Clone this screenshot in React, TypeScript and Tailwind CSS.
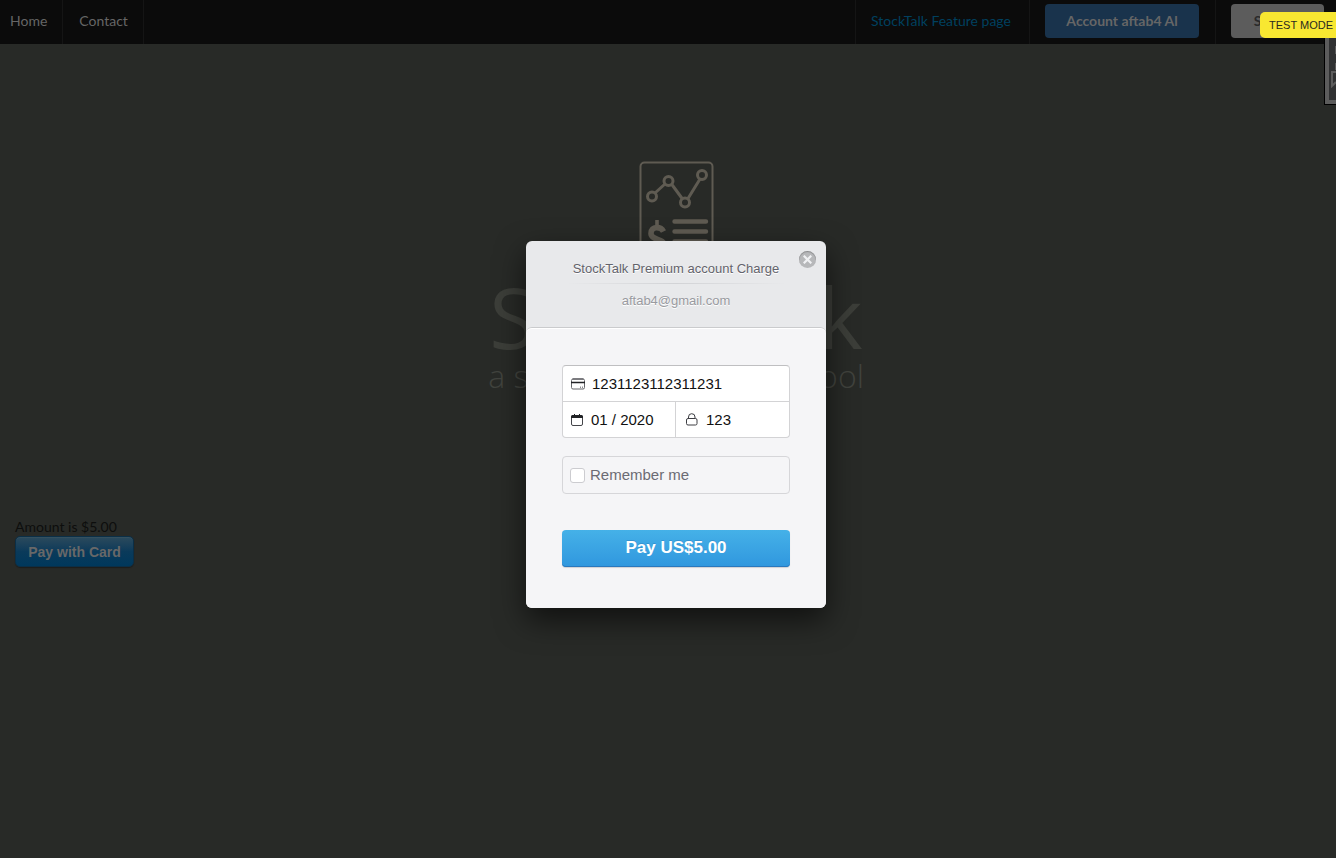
import React from "react";

function Logo() {
  return (
    <svg width="76" height="96" viewBox="-1 0 76 96" fill="none" stroke="#5f5b52" aria-hidden="true">
      <rect x="1.5" y="1.5" width="72" height="93" rx="4" strokeWidth="2" />
      <g strokeWidth="3">
        <path d="M16 32L26.500 22.500M32.500 23L43.500 38M49 37.500L61 18" />
        <circle cx="13" cy="35.500" r="4.500" />
        <circle cx="29.500" cy="20" r="4.500" />
        <circle cx="46" cy="41.500" r="4.500" />
        <circle cx="63" cy="14" r="4.500" />
      </g>
      <path d="M35.500 60.500H67M35.500 70.500H67M35.500 80.500H67" strokeWidth="4.400" strokeLinecap="round" />
      <path d="M24.500 70.500C22 65.500 12 64.500 12 72.500C12 79 25 77.500 25 84C25 91 12 90 9.500 84.500" strokeWidth="5.600" />
      <path d="M18 59V66M18 88V93" strokeWidth="3.600" />
    </svg>
  );
}

function CardIcon() {
  return (
    <svg className="shrink-0" width="14" height="12" viewBox="0 0 14 12" fill="none" aria-hidden="true">
      <rect x="0.5" y="1" width="13" height="10" rx="1.5" stroke="#66676b" />
      <path d="M1.500 1H12.500" stroke="#44454a" />
      <path d="M0 4.500H14" stroke="#222326" strokeWidth="1.600" />
      <path d="M9.500 8.500V10M11.500 8.500V10" stroke="#8b8c90" />
    </svg>
  );
}

function CalendarIcon() {
  return (
    <svg className="shrink-0" width="12" height="12" viewBox="0 0 12 12" fill="none" aria-hidden="true">
      <rect x="0.5" y="1.5" width="11" height="10" rx="1.5" stroke="#44454a" />
      <path d="M0 4V2.500Q0 1 1.500 1H10.500Q12 1 12 2.500V4Z" fill="#222326" />
      <path d="M3.500 0V2M8.500 0V2" stroke="#222326" />
    </svg>
  );
}

function LockIcon() {
  return (
    <svg className="shrink-0" width="12" height="13" viewBox="0 0 12 13" fill="none" stroke="#3c3d42" aria-hidden="true">
      <rect x="0.5" y="5.5" width="10.500" height="6.500" rx="1.5" />
      <path d="M2.500 5.500V4Q2.500 0.700 5.700 0.700Q9 0.700 9 4V5.500" />
    </svg>
  );
}

function NavBar() {
  return (
    <nav className="flex h-11 items-stretch justify-between bg-[#0b0b0b] text-sm text-[#666]">
      <div className="flex">
        <a href="#home" className="flex items-center border-r border-[#151515] pr-[15px] pb-[2px] pl-[10px]">Home</a>
        <a href="#contact" className="flex items-center border-r border-[#151515] pr-[15px] pb-[2px] pl-4">Contact</a>
      </div>
      <div className="flex pr-3">
        <div className="flex items-center border-l border-[#151515] pr-4 pb-[2px] pl-[15px]">
          <a href="#feature" className="w-[142px] whitespace-nowrap text-[#00405f]">StockTalk Feature page</a>
        </div>
        <div className="flex items-start border-l border-[#151515] pt-1 pr-4 pl-[15px]">
          <button type="button" className="h-[34px] w-[154px] rounded bg-[#19334c] font-bold">Account aftab4 Al</button>
        </div>
        <div className="flex items-start border-l border-[#151515] pt-1 pl-[15px]">
          <button type="button" className="h-[34px] w-[93px] rounded bg-[#5c5c5c] font-bold text-[#2a2a2a]">Signout</button>
        </div>
      </div>
    </nav>
  );
}

function Hero() {
  return (
    <header className="flex flex-col items-center pt-[117px] pl-4 font-['Open_Sans',sans-serif] font-light text-[#41433e]">
      <Logo />
      <h1 className="mt-[19px] text-[85px] leading-[80px] font-normal whitespace-nowrap text-[#3c3e39]">StockTalk</h1>
      <p className="text-[32px] leading-[40px] whitespace-nowrap">a stock market trends tool</p>
    </header>
  );
}

function PaymentDialog() {
  return (
    <div className="absolute inset-x-0 top-[241px] flex justify-center pl-4 font-['Liberation_Sans',Arial,sans-serif]">
      <form
        role="dialog"
        aria-label="StockTalk Premium account Charge"
        onSubmit={(e) => e.preventDefault()}
        className="relative w-[300px] rounded-md bg-[#e8e9eb] shadow-[0_12px_30px_rgba(0,0,0,0.6)]"
      >
        <button
          type="button"
          aria-label="Close"
          className="absolute top-[10px] right-[10px] flex size-[17px] items-center justify-center rounded-full bg-[#b7b8ba] shadow-[inset_0_1px_1px_rgba(0,0,0,0.25)]"
        >
          <svg width="9" height="9" viewBox="0 0 9 9" stroke="#f0f1f3" strokeWidth="2.200" aria-hidden="true">
            <path d="M0.700 0.700L8.300 8.300M8.300 0.700L0.700 8.300" />
          </svg>
        </button>
        <div className="flex h-[86px] flex-col items-center pt-[19px] text-[13px] leading-[18px]">
          <h2 className="text-[#63636b] [text-shadow:0_1px_0_#fff]">StockTalk Premium account Charge</h2>
          <div className="mt-[5px] h-px w-[220px] bg-linear-to-r from-transparent via-[#d2d3d6] to-transparent" />
          <p className="mt-2 text-[#999aa0] [text-shadow:0_1px_0_#fff]">aftab4@gmail.com</p>
        </div>
        <div className="rounded-md border-t border-[#cacbcd] bg-[#f5f5f7] px-9 pt-[37px] pb-[41px] shadow-[inset_0_1px_0_#fff]">
          <div className="overflow-hidden rounded border border-[#d3d3d5] border-t-[#bfbfc1] bg-white text-[15px] text-[#111]">
            <label className="flex h-[35px] items-center gap-[7px] pl-2">
              <CardIcon />
              <input aria-label="Card number" defaultValue="1231123112311231" className="w-full min-w-0 pt-[2px] outline-none" />
            </label>
            <div className="flex h-9 border-t border-[#d3d3d5]">
              <label className="flex w-[113px] items-center gap-2 border-r border-[#d3d3d5] pl-2">
                <CalendarIcon />
                <input aria-label="Expiry" defaultValue="01 / 2020" className="w-full min-w-0 pt-[2px] outline-none" />
              </label>
              <label className="flex flex-1 items-center gap-2 pl-[10px]">
                <LockIcon />
                <input aria-label="CVC" defaultValue="123" className="w-full min-w-0 pt-[2px] outline-none" />
              </label>
            </div>
          </div>
          <label className="mt-[18px] flex h-[38px] items-center gap-[5px] rounded border border-[#d6d6d9] pl-[7px] text-[15px] text-[#6b6b73]">
            <input
              type="checkbox"
              className="size-[15px] appearance-none rounded-[3px] border border-[#ccccd0] bg-white checked:bg-[#3ea3e2]"
            />
            Remember me
          </label>
          <button
            type="submit"
            className="mt-9 h-[37px] w-full rounded bg-linear-to-b from-[#45b1e8] to-[#3097de] pb-px text-[17px] font-bold text-white shadow-[inset_0_-1px_0_#2a78bd,0_1px_1px_rgba(0,0,0,0.15)] [text-shadow:0_-1px_0_rgba(46,134,196,0.6)]"
          >
            Pay US$5.00
          </button>
        </div>
      </form>
    </div>
  );
}

function ChatTab() {
  return (
    <div className="absolute top-5 right-0 h-[85px] w-3 overflow-hidden border-b border-l border-black">
      <div className="flex h-full items-end border-b-4 border-l-4 border-[#5c5c5c] bg-[#303132] pb-3 pl-[2px]">
        <svg width="5" height="42" viewBox="0 0 5 42" fill="none" stroke="#5c5c5c" aria-hidden="true">
          <path d="M4.500 0V8M4.500 17V24" />
          <path d="M5 26H1V40L5 36" strokeWidth="2" />
        </svg>
      </div>
    </div>
  );
}

export default function App() {
  return (
    <div className="relative min-h-screen overflow-hidden bg-[#282a27] font-[Lato,sans-serif]">
      <NavBar />
      <Hero />
      <main className="mt-[122px] flex flex-col items-start pl-[15px]">
        <p className="text-sm leading-[18px] text-[#0d0e0d]">Amount is $5.00</p>
        <button
          type="button"
          className="h-[31px] w-[119px] rounded-[5px] border border-[#0b2f47] bg-linear-to-b from-[#2b4a5c] via-[#0a3a5a] via-50% to-[#00385c] font-['Liberation_Sans',Arial,sans-serif] text-sm font-bold text-[#686868] shadow-[inset_0_1px_0_#34505f,0_1px_1px_rgba(0,0,0,0.3)]"
        >
          Pay with Card
        </button>
      </main>
      <ChatTab />
      <PaymentDialog />
      <div className="absolute top-3 right-0 rounded-l-[5px] bg-[#f8e731] pr-[3px] pl-[9px] font-['Liberation_Sans',Arial,sans-serif] text-[11px] leading-[26px] text-[#2a2a20]">
        TEST MODE
      </div>
    </div>
  );
}
